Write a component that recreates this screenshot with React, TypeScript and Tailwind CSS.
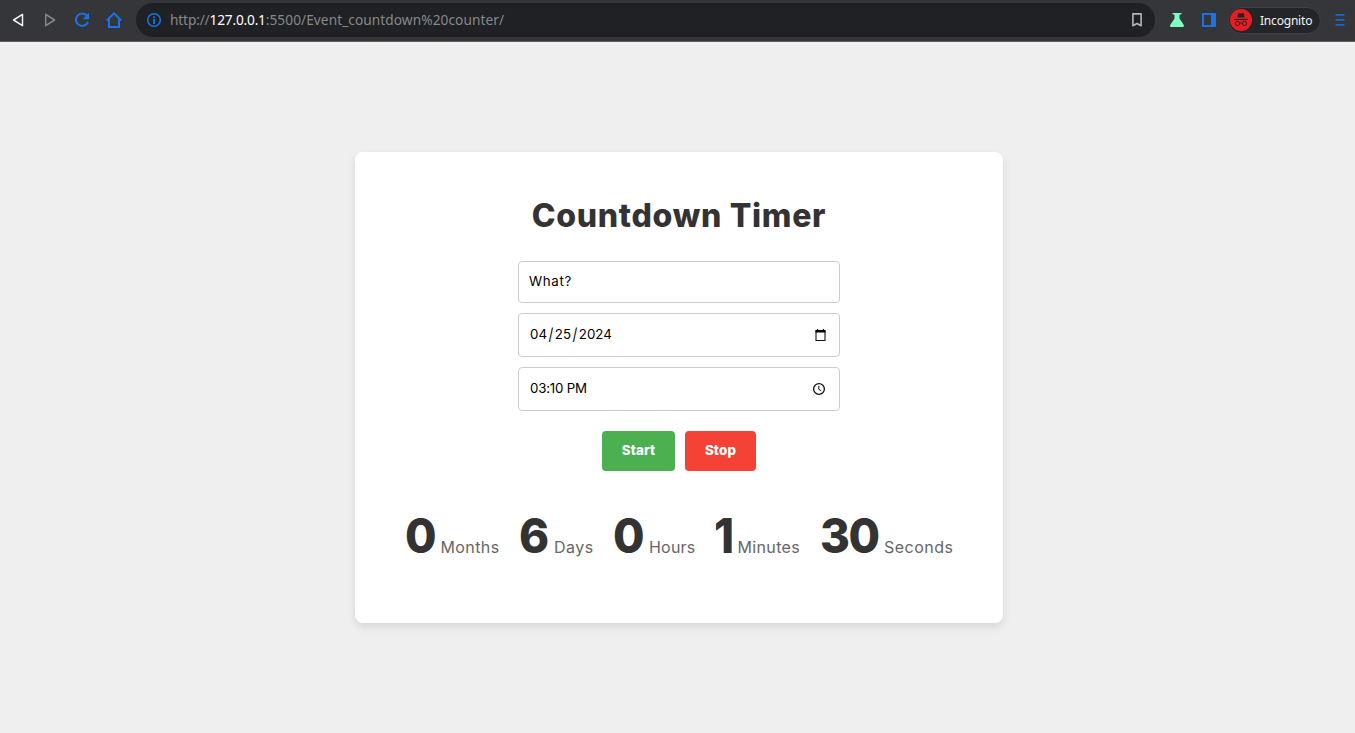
import type { ReactNode } from 'react';

function Toolbar() {
  return (
    <header className="flex h-[42px] items-start border-b border-[#5d5e62] bg-[#35363a] font-['Noto_Sans',sans-serif]">
      <nav className="flex h-10 w-[136px] shrink-0 items-center">
        <svg width="136" height="40" viewBox="0 0 136 40" fill="none">
          <path d="M22.5 14.3v11.4L13.6 20z" stroke="#f1f3f4" strokeWidth="1.5" strokeLinejoin="round" />
          <path d="M45.7 14.3v11.4l8.9-5.7z" stroke="#86878a" strokeWidth="1.5" strokeLinejoin="round" />
          <path d="M86.9 15.6A6.2 6.2 0 1 0 88 21.8" stroke="#1a73e8" strokeWidth="2" />
          <path d="M89 12.8v6.4h-6.4z" fill="#1a73e8" />
          <path d="M106.8 20.5 114 13.4l7.2 7.1M109 19.5V27h10v-7.500" stroke="#1a73e8" strokeWidth="2" />
        </svg>
      </nav>
      <div className="mt-[3px] flex h-[34px] w-[1019px] shrink-0 items-center rounded-full bg-[#202124] pr-[11px] pl-[10px]">
        <svg width="16" height="16" viewBox="0 0 16 16" fill="none">
          <circle cx="8" cy="8" r="6.300" stroke="#1a73e8" strokeWidth="1.5" />
          <path d="M7.100 7h1.800v5H7.100zM7.100 4.300h1.800v1.700H7.100z" fill="#1a73e8" />
        </svg>
        <p className="ml-2 flex-1 text-[13.700px] leading-[18px] whitespace-nowrap text-[#86888b]">
          <span className="tracking-[-0.150px]">http://</span>
          <span className="tracking-[-0.200px] text-white">127.0.0.1</span>
          <span className="tracking-[0.060px]">:5500/Event_countdown%20counter/</span>
        </p>
        <svg width="14" height="16" viewBox="0 0 14 16" fill="none">
          <path d="M2.900 1.900h8.200v11.800L7 11.500l-4.100 2.200z" stroke="#b5b6b8" strokeWidth="1.600" strokeLinejoin="round" />
        </svg>
      </div>
      <div className="flex h-10 flex-1 items-center pl-[14px]">
        <svg width="16" height="16" viewBox="0 0 16 16" fill="#7dffc0">
          <path d="M3.600 1h8.800v1.500h-1.900v4.100l4.300 6.500c.6 1-.1 1.900-1 1.900H2.200c-.9 0-1.600-.9-1-1.900l4.300-6.500V2.500H3.600z" />
        </svg>
        <svg className="ml-4" width="16" height="16" viewBox="0 0 16 16">
          <path d="M1 1h14v14H1zM3 3v10h7V3z" fill="#1a73e8" fillRule="evenodd" />
        </svg>
        <div className="ml-[11px] flex h-[27px] w-[93px] items-center rounded-full border border-[#404145] bg-[#242529] pl-px">
          <svg width="22" height="22" viewBox="0 0 22 22" fill="none">
            <circle cx="11" cy="11" r="11" fill="#e81c23" />
            <path d="M7.200 8.600 8.300 4.500c.1-.4.400-.6.800-.5l1.900.5 1.900-.5c.4-.1.700.1.800.5l1.100 4.100z" fill="#2c2023" />
            <path d="M4 10.500h14" stroke="#2c2023" strokeWidth="1.200" />
            <circle cx="7.500" cy="14.500" r="2.100" stroke="#2c2023" strokeWidth="1" />
            <circle cx="14.500" cy="14.500" r="2.100" stroke="#2c2023" strokeWidth="1" />
            <path d="M9.500 14.200q1.500-.8 3 0" stroke="#2c2023" />
          </svg>
          <span className="mt-px ml-[8px] text-[12px] leading-4 tracking-[-0.200px] text-[#f1f3f4]">Incognito</span>
        </div>
        <svg className="ml-3" width="14" height="14" viewBox="0 0 14 14" fill="#1a67cf">
          <path d="M2.500 1h9v1.800h-9zM2.500 6h9v1.800h-9zM2.500 11h9v1.800h-9z" />
        </svg>
      </div>
    </header>
  );
}

function Field({ children, icon, className }: { children: ReactNode; icon?: ReactNode; className: string }) {
  return (
    <div className={`flex w-full items-center justify-between rounded-[4px] border border-[#ccc] text-[13.300px] leading-5 text-black ${className}`}>
      <span className="whitespace-nowrap">{children}</span>
      {icon}
    </div>
  );
}

const units = [
  { value: '0', label: 'Months', box: 'w-[114px]', num: 'w-[35.500px]', text: 'tracking-[0.400px]' },
  { value: '6', label: 'Days', box: 'w-[94px]', num: 'w-[35px]', text: 'tracking-[0.500px]' },
  { value: '0', label: 'Hours', box: 'w-[101px]', num: 'w-[36px]', text: 'tracking-[0.200px]' },
  { value: '1', label: 'Minutes', box: 'w-[106px]', num: 'w-[23.500px]', text: 'tracking-[0.350px]' },
  { value: '30', label: 'Seconds', box: 'w-[140px]', num: 'w-[64px]', text: 'tracking-[0.500px]' },
];

export default function App() {
  return (
    <div className="flex h-[733px] flex-col overflow-hidden bg-[#efefef] font-['Inter','Liberation_Sans',sans-serif]">
      <Toolbar />
      <main className="flex flex-1 justify-center pt-[110px] pl-[3px]">
        <section className="flex h-[471px] w-[648px] flex-col items-center rounded-[8px] bg-white shadow-[0_4px_8px_rgba(0,0,0,0.1)]">
          <h1 className="mt-[40px] text-[32px] leading-[48px] font-extrabold tracking-[0.700px] whitespace-nowrap text-[#333]">Countdown Timer</h1>
          <div className="mt-[21px] flex w-[322px] flex-col gap-[10px]">
            <Field className="h-[42px] pb-[2px] pl-[10px] tracking-[0.700px]">What?</Field>
            <Field
              className="h-[44px] pr-[12px] pb-[3px] pl-[11px]"
              icon={
                <svg className="mt-[3px]" width="14" height="14" viewBox="0 0 14 14" fill="none">
                  <path d="M3 3h9v9.500H3z" stroke="#111" strokeWidth="1.100" />
                  <path d="M2.500 2h10v2.500h-10zM4 1h1.200v2H4zM9.800 1H11v2H9.800z" fill="#000" />
                </svg>
              }
            >
              04<span className="inline-block scale-y-125 px-[1.500px]">/</span>25<span className="inline-block scale-y-125 px-[1.500px]">/</span>2024
            </Field>
            <Field
              className="h-[44px] pr-[13px] pb-[3px] pl-[11px] tracking-[-0.200px]"
              icon={
                <svg className="mt-[3px]" width="14" height="14" viewBox="0 0 14 14" fill="none">
                  <circle cx="7" cy="7" r="5.400" stroke="#111" strokeWidth="1.300" />
                  <path d="M6.800 3.800v3.500l2.400 1.500" stroke="#111" strokeWidth="1" />
                </svg>
              }
            >
              03:10 PM
            </Field>
          </div>
          <div className="mt-[20px] flex gap-[10px] text-[13.300px] leading-5 font-extrabold tracking-[0.200px] text-white">
            <button className="h-[40px] w-[73px] rounded-[4px] bg-[#4caf50] pb-[2px]">Start</button>
            <button className="h-[40px] w-[71px] rounded-[4px] bg-[#f44336] pb-[2px]">Stop</button>
          </div>
          <div className="mt-[30px] flex w-[548px] text-[#333]">
            {units.map((u) => (
              <div key={u.label} className={`flex shrink-0 items-baseline whitespace-nowrap ${u.box}`}>
                <span className={`origin-left scale-x-95 text-[48px] leading-[70px] font-extrabold tracking-[-1.500px] ${u.num}`}>{u.value}</span>
                <span className={`text-[16px] leading-6 font-normal text-[#666] ${u.text}`}>{u.label}</span>
              </div>
            ))}
          </div>
        </section>
      </main>
    </div>
  );
}
